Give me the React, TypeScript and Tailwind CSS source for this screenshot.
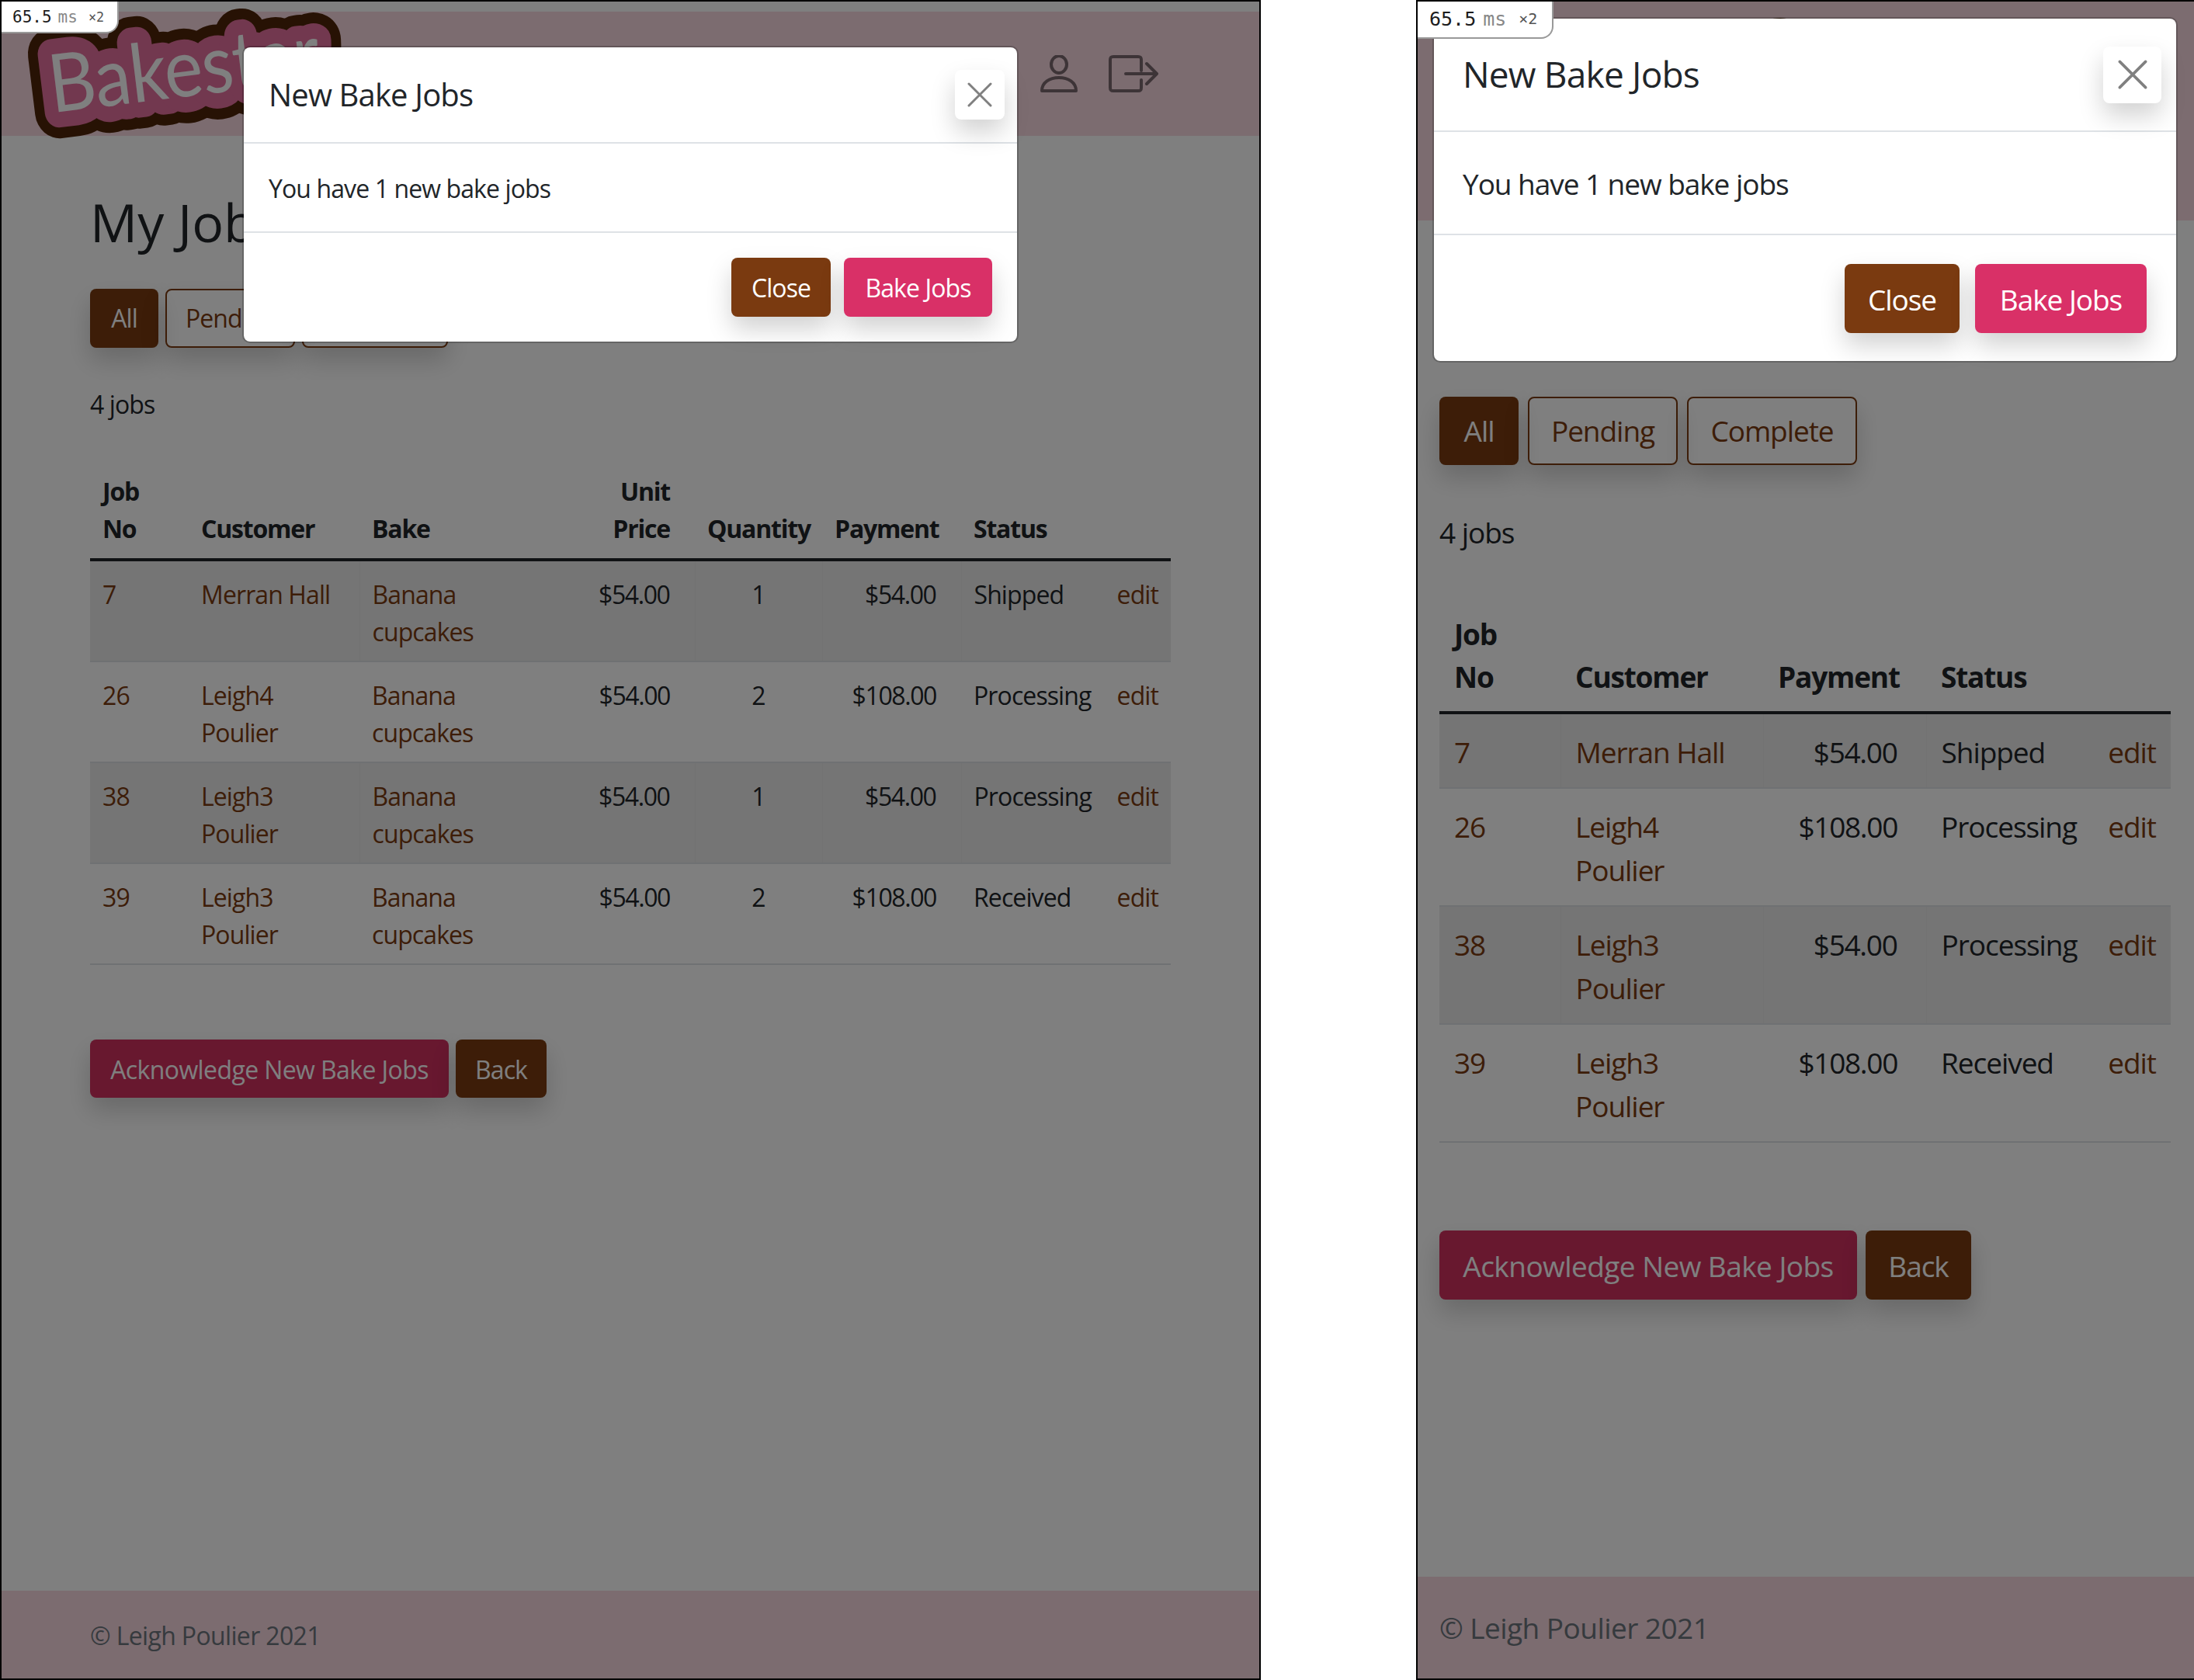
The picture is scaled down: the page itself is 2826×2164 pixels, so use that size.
const rows = [
  { no: '7', customer: 'Merran Hall', price: '$54.00', qty: '1', payment: '$54.00', status: 'Shipped' },
  { no: '26', customer: 'Leigh4 Poulier', price: '$54.00', qty: '2', payment: '$108.00', status: 'Processing' },
  { no: '38', customer: 'Leigh3 Poulier', price: '$54.00', qty: '1', payment: '$54.00', status: 'Processing' },
  { no: '39', customer: 'Leigh3 Poulier', price: '$54.00', qty: '2', payment: '$108.00', status: 'Received' },
];

const wide = {
  frame: 'w-[1624px] border-2',
  text: 'text-[32px] leading-[48px] tracking-[-0.9px]',
  header: 'mt-[13px] h-[160px] pl-[32px] pr-[130px] items-center',
  logo: 'w-[404px] h-[164px] -my-[2px]',
  main: 'pl-[114px] pr-[114px]',
  h1: 'pt-[72px] mb-[48px] text-[68px] leading-[77px]',
  filters: 'gap-[9px]',
  btnH: 'h-[76px]',
  allW: 'w-[88px]',
  pendingW: 'w-[167px]',
  completeW: 'w-[188px]',
  jobs: 'mt-[49px] mb-[56px]',
  th: 'pt-[8px] pb-[14px] px-[16px]',
  td: 'pt-[19px] pb-[13px] px-[16px]',
  money: 'pr-[32px]',
  moneyText: 'tracking-[-1.4px]',
  actions: 'mt-[96px] gap-[9px]',
  ackBtn: 'w-[462px] h-[75px] pt-[2px] tracking-[-0.6px]',
  backBtn: 'w-[117px] h-[75px] pt-[2px]',
  footer: 'h-[113px] pl-[114px] pt-[2px] tracking-[-0.65px]',
  modal: 'left-[310px] top-[57px] w-[1000px]',
  modalHead: 'h-[124px] pl-[32px] pr-[16px]',
  title: 'text-[40px] tracking-[-0.85px]',
  closeBox: 'w-[64px] h-[64px]',
  closeIcon: 'w-[32px] h-[32px]',
  modalBody: 'h-[115px] pl-[32px] pt-[2px]',
  modalFoot: 'pt-[32px] pb-[32px] pr-[32px] gap-[17px]',
  closeBtn: 'w-[128px] h-[76px] pt-[2px]',
  bakeBtn: 'w-[191px] h-[76px] pt-[2px]',
  stamp: 'w-[151px] h-[41px] pl-[14px] text-[21px]',
  stampGap: 'ml-[8px]',
  stampGap2: 'ml-[14px]',
};

const narrow = {
  frame: 'w-[1002px] ml-[200px] border-y-2 border-l-2',
  text: 'text-[37px] leading-[55.5px] tracking-[-1.05px]',
  header: 'h-[282px] pl-[146px] pt-[23px] items-start',
  logo: 'w-[467px] h-[190px]',
  main: 'pl-[28px] pr-[30px]',
  h1: 'pt-[60px] mb-[78px] text-[76px] leading-[89px]',
  filters: 'gap-[12px]',
  btnH: 'h-[88px]',
  allW: 'w-[102px]',
  pendingW: 'w-[193px]',
  completeW: 'w-[219px]',
  jobs: 'mt-[59px] mb-[66px]',
  th: 'pt-[9px] pb-[16px] px-[19px]',
  td: 'pt-[21px] pb-[18px] px-[19px]',
  money: 'pr-[37px]',
  moneyText: 'tracking-[-1.3px]',
  actions: 'mt-[113px] gap-[11px]',
  ackBtn: 'w-[538px] h-[89px] pt-[2px] tracking-[-0.55px]',
  backBtn: 'w-[136px] h-[89px] pt-[2px]',
  footer: 'h-[131px] pl-[28px] tracking-[-0.55px]',
  modal: 'left-[19px] top-[20px] w-[960px]',
  modalHead: 'h-[146px] pl-[37px] pr-[19px]',
  title: 'text-[46px] tracking-[-0.8px]',
  closeBox: 'w-[75px] h-[73px]',
  closeIcon: 'w-[38px] h-[38px]',
  modalBody: 'h-[133px] pl-[37px] pt-[2px]',
  modalFoot: 'pt-[37px] pb-[36px] pr-[38px] gap-[20px]',
  closeBtn: 'w-[148px] h-[89px] pt-[2px]',
  bakeBtn: 'w-[221px] h-[89px] pt-[2px]',
  stamp: 'w-[175px] h-[48px] pl-[15px] text-[25px]',
  stampGap: 'ml-[9px]',
  stampGap2: 'ml-[16px]',
};

type Sizes = typeof wide;

function Logo({ className }: { className: string }) {
  const layers = [
    { stroke: '#4f2508', width: 68 },
    { stroke: '#e4709f', width: 40 },
    { stroke: '#ffffff', width: 0 },
  ];
  return (
    <svg viewBox="0 0 404 164" className={`shrink-0 overflow-visible ${className}`}>
      <g transform="rotate(-7 36 130)">
        {layers.map((l) => (
          <text
            key={l.stroke}
            x="33"
            y="132"
            textLength="350"
            lengthAdjust="spacingAndGlyphs"
            fontFamily="Lato, sans-serif"
            fontSize="104"
            fill="#ffffff"
            stroke={l.stroke}
            strokeWidth={l.width}
            strokeLinejoin="round"
          >
            Bakestar
          </text>
        ))}
      </g>
    </svg>
  );
}

function NavIcons() {
  return (
    <div className="ml-auto flex items-start">
      <div className="w-[48px] h-[48px] rounded-full bg-[#d93067] mr-[120px] -mt-[7px]"></div>
      <div className="flex items-center gap-[40px]">
        <svg viewBox="0 0 48 48" className="w-[48px] h-[48px]" fill="none" stroke="#7a686f" strokeWidth="4" strokeLinejoin="round">
          <ellipse cx="24" cy="12" rx="10" ry="11" />
          <path d="M2 46c0-11 10-17 22-17s22 6 22 17z" />
        </svg>
        <svg viewBox="0 0 64 48" className="w-[64px] h-[48px]" fill="none" stroke="#7a686f" strokeWidth="4" strokeLinecap="round" strokeLinejoin="round">
          <path d="M42 20V6c0-3-1-4-4-4H6C3 2 2 3 2 6v36c0 3 1 4 4 4h32c3 0 4-1 4-4V32" />
          <path d="M22 24h40M49 11l13 13-13 13" />
        </svg>
      </div>
    </div>
  );
}

function JobsTable({ s, full }: { s: Sizes; full: boolean }) {
  const seam = 'border-l border-[#e5e5e5]';
  return (
    <table className="w-full table-fixed border-collapse">
      {full ? (
        <colgroup>
          <col className="w-[127px]" />
          <col className="w-[220px]" />
          <col className="w-[250px]" />
          <col className="w-[182px]" />
          <col className="w-[164px]" />
          <col className="w-[179px]" />
          <col className="w-[184px]" />
          <col className="w-[86px]" />
        </colgroup>
      ) : (
        <colgroup>
          <col className="w-[156px]" />
          <col className="w-[261px]" />
          <col className="w-[210px]" />
          <col className="w-[214px]" />
          <col className="w-[101px]" />
        </colgroup>
      )}
      <thead>
        <tr className="border-b-4 border-[#212529] align-bottom font-bold tracking-[-1.2px]">
          <th className={`text-left ${s.th}`}><span className="block w-min">Job No</span></th>
          <th className={`text-left ${s.th}`}>Customer</th>
          {full && <th className={`text-left ${s.th}`}>Bake</th>}
          {full && <th className={`text-right ${s.th} ${s.money}`}><span className="inline-block w-min">Unit Price</span></th>}
          {full && <th className={`text-center ${s.th}`}>Quantity</th>}
          <th className={`text-right ${s.th} ${s.money}`}>Payment</th>
          <th className={`text-left ${s.th}`}>Status</th>
          <th className={s.th}></th>
        </tr>
      </thead>
      <tbody>
        {rows.map((r, i) => {
          const odd = i % 2 === 0;
          const edge = odd ? seam : '';
          return (
            <tr key={r.no} className={`border-b-2 border-[#dee2e6] align-top ${odd ? 'bg-[#ebebeb]' : ''}`}>
              <td className={`text-[#7a3a10] ${s.td}`}>{r.no}</td>
              <td className={`text-[#7a3a10] ${full ? '' : edge} ${s.td}`}>{r.customer}</td>
              {full && <td className={`text-[#7a3a10] ${edge} ${s.td}`}>Banana cupcakes</td>}
              {full && <td className={`text-right ${s.td} ${s.money} ${s.moneyText}`}>{r.price}</td>}
              {full && <td className={`text-center ${edge} ${s.td}`}>{r.qty}</td>}
              <td className={`text-right ${edge} ${s.td} ${s.money} ${s.moneyText}`}>{r.payment}</td>
              <td className={`${edge} ${s.td}`}>{r.status}</td>
              <td className={`text-right text-[#7a3a10] ${s.td}`}>edit</td>
            </tr>
          );
        })}
      </tbody>
    </table>
  );
}

function Screen({ s, full }: { s: Sizes; full: boolean }) {
  const shadow = 'shadow-[0_16px_32px_rgba(0,0,0,0.18)]';
  const outline = `border-2 border-[#7a3a10] rounded-[8px] text-[#7a3a10] ${shadow} ${s.btnH}`;
  return (
    <div className={`relative h-full shrink-0 overflow-hidden border-black bg-white text-[#212529] font-['Open_Sans',sans-serif] ${s.frame} ${s.text}`}>
      <div className="flex flex-col h-full">
        <header className={`flex shrink-0 bg-[#f8d8e0] ${s.header}`}>
          <Logo className={s.logo} />
          {full && <NavIcons />}
        </header>

        <main className={`grow ${s.main}`}>
          <h1 className={`font-normal tracking-normal ${s.h1}`}>My Jobs</h1>
          <div className={`flex ${s.filters}`}>
            <button className={`bg-[#7a3a10] text-white rounded-[8px] ${shadow} ${s.btnH} ${s.allW}`}>All</button>
            <button className={`${outline} ${s.pendingW}`}>Pending</button>
            <button className={`${outline} ${s.completeW}`}>Complete</button>
          </div>
          <p className={s.jobs}>4 jobs</p>
          <JobsTable s={s} full={full} />
          <div className={`flex ${s.actions}`}>
            <button className={`bg-[#d0305f] text-white rounded-[8px] ${shadow} ${s.ackBtn}`}>Acknowledge New Bake Jobs</button>
            <button className={`bg-[#7a3a10] text-white rounded-[8px] ${shadow} ${s.backBtn}`}>Back</button>
          </div>
        </main>

        <footer className={`flex items-center shrink-0 bg-[#f8d8e0] text-[#6c757d] ${s.footer}`}>© Leigh Poulier 2021</footer>
      </div>

      {/* backdrop */}
      <div className="absolute inset-0 bg-[rgba(0,0,0,0.5)]"></div>

      <div className={`absolute bg-white bg-clip-padding border-2 border-[rgba(0,0,0,0.2)] rounded-[10px] ${s.modal}`}>
        <div className={`flex items-center justify-between border-b-2 border-[#dee2e6] ${s.modalHead}`}>
          <h5 className={`font-normal ${s.title}`}>New Bake Jobs</h5>
          <button className={`flex items-center justify-center rounded-[8px] bg-white ${shadow} ${s.closeBox}`}>
            <svg viewBox="0 0 32 32" className={s.closeIcon} stroke="#808080" strokeWidth="3" strokeLinecap="round">
              <path d="M2 2l28 28M30 2L2 30" />
            </svg>
          </button>
        </div>
        <div className={`flex items-center border-b-2 border-[#dee2e6] ${s.modalBody}`}>You have 1 new bake jobs</div>
        <div className={`flex justify-end ${s.modalFoot}`}>
          <button className={`bg-[#7a3a10] text-white rounded-[8px] ${shadow} ${s.closeBtn}`}>Close</button>
          <button className={`bg-[#d93067] text-white rounded-[8px] ${shadow} ${s.bakeBtn}`}>Bake Jobs</button>
        </div>
      </div>

      <div className={`absolute left-0 top-0 flex items-center bg-white border-r-2 border-b-2 border-[#999999] rounded-br-[16px] tracking-normal font-['DejaVu_Sans_Mono',monospace] ${s.stamp}`}>
        <span className="text-[#1c1c1c]">65.5</span>
        <span className={`text-[#888888] ${s.stampGap}`}>ms</span>
        <span className={`text-[#555555] text-[0.8em] ${s.stampGap2}`}>×2</span>
      </div>
    </div>
  );
}

export default function App() {
  return (
    <div className="flex w-[2826px] h-[2164px] bg-white overflow-hidden">
      <Screen s={wide} full={true} />
      <Screen s={narrow} full={false} />
    </div>
  );
}
